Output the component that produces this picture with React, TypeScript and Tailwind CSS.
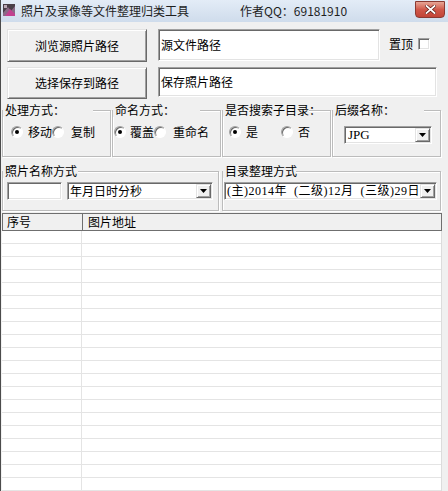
import React from "react";

const sunken =
  "border border-t-[#a0a0a0] border-l-[#a0a0a0] border-b-white border-r-white shadow-[inset_1px_1px_0_#696969,inset_-1px_-1px_0_#e3e3e3] bg-white";

function AppIcon() {
  return (
    <svg width="12" height="12" viewBox="0 0 12 12" className="ml-[2px] mt-[4px] shrink-0">
      <rect x="0" y="0" width="12" height="12" fill="#4a3f48" />
      <path d="M0 9 L5 3 L8 7 L12 2 L12 12 L0 12 Z" fill="#8a6a86" />
      <path d="M2 12 L7 5 L12 10 L12 12 Z" fill="#c2418f" />
      <rect x="1" y="1" width="3" height="3" fill="#b9a8b5" />
    </svg>
  );
}

function CloseButton() {
  return (
    <div className="ml-auto mr-[3px] mt-[1px] flex h-[17px] w-[30px] items-center justify-center rounded-b-[4px] border border-[#8b3a32] bg-linear-to-b from-[#e6a596] via-[#d0584a] to-[#c24538]">
      <svg width="11" height="9" viewBox="0 0 11 9">
        <path d="M1.5 1 L9.5 8 M9.5 1 L1.5 8" stroke="#5a1a14" strokeWidth="3.2" strokeLinecap="square" />
        <path d="M1.5 1 L9.5 8 M9.5 1 L1.5 8" stroke="#ffffff" strokeWidth="1.8" strokeLinecap="square" />
      </svg>
    </div>
  );
}

function Button3D({ label, className }: { label: string; className: string }) {
  return (
    <button
      className={`flex shrink-0 items-center justify-center border border-t-[#e3e3e3] border-l-[#e3e3e3] border-b-[#696969] border-r-[#696969] bg-[#f0f0f0] text-[12px] leading-none text-black shadow-[inset_1px_1px_0_#ffffff,inset_-1px_-1px_0_#a0a0a0] ${className}`}
    >
      {label}
    </button>
  );
}

function DropButton() {
  return (
    <span className="mr-[1px] flex h-[14px] w-[15px] shrink-0 items-center justify-center border border-t-[#e3e3e3] border-l-[#e3e3e3] border-b-[#696969] border-r-[#696969] bg-[#f0f0f0] shadow-[inset_1px_1px_0_#ffffff,inset_-1px_-1px_0_#a0a0a0]">
      <svg width="7" height="4" viewBox="0 0 7 4">
        <path d="M0 0 L7 0 L3.5 4 Z" fill="#000" />
      </svg>
    </span>
  );
}

function Combo({ text, className, textClass }: { text: string; className: string; textClass: string }) {
  return (
    <div className={`flex shrink-0 items-center ${sunken} ${className}`}>
      <span className={`min-w-0 flex-1 whitespace-nowrap pl-[2px] text-[12px] leading-[16px] ${textClass}`}>
        {text}
      </span>
      <DropButton />
    </div>
  );
}

function Radio({ checked }: { checked?: boolean }) {
  return (
    <span className="flex h-[12px] w-[12px] shrink-0 items-center justify-center rounded-full border border-t-[#a0a0a0] border-l-[#a0a0a0] border-b-white border-r-white bg-white shadow-[inset_1px_1px_0_#696969]">
      {checked && <span className="h-[4px] w-[4px] rounded-full bg-black" />}
    </span>
  );
}

function Group({
  legend,
  legendClass,
  className,
  children,
}: {
  legend: string;
  legendClass: string;
  className: string;
  children: React.ReactNode;
}) {
  return (
    <fieldset
      className={`shrink-0 border border-[#bcbcbc] shadow-[inset_1px_1px_0_#ffffff,1px_1px_0_#ffffff] ${className}`}
    >
      <legend className={`bg-[#f0f0f0] pl-[2px] text-[12px] leading-[14px] whitespace-nowrap ${legendClass}`}>
        {legend}
      </legend>
      {children}
    </fieldset>
  );
}

export default function App() {
  const rows = Array.from({ length: 20 });

  return (
    <div className="flex h-[491px] w-[448px] flex-col overflow-hidden border-l border-[#4b4b4b] bg-[#f0f0f0] font-[Noto_Sans_CJK_SC,sans-serif] text-black">
      {/* title bar */}
      <div className="flex h-[22px] shrink-0 items-start bg-linear-to-b from-[#e3ecf7] to-[#cfdcec]">
        <AppIcon />
        <span className="ml-[6px] mt-[3px] w-[219px] shrink-0 text-[12px] leading-[16px] text-[#1e1e1e]">
          照片及录像等文件整理归类工具
        </span>
        <span className="mt-[3px] text-[12px] leading-[16px] text-[#1e1e1e]">作者QQ：69181910</span>
        <CloseButton />
      </div>

      {/* source path */}
      <div className="mt-[7px] flex shrink-0 items-start">
        <Button3D label="浏览源照片路径" className="ml-[6px] h-[33px] w-[140px]" />
        <div className={`ml-[11px] flex h-[32px] w-[222px] shrink-0 items-center pl-[2px] text-[12px] ${sunken}`}>
          源文件路径
        </div>
        <div className="ml-[9px] mt-[9px] flex h-[12px] items-center">
          <span className="text-[12px] leading-none">置顶</span>
          <span className={`ml-[5px] h-[12px] w-[12px] ${sunken}`} />
        </div>
      </div>

      {/* save path */}
      <div className="mt-[5px] flex shrink-0 items-start">
        <Button3D label="选择保存到路径" className="ml-[6px] h-[32px] w-[140px]" />
        <div className={`ml-[11px] flex h-[30px] w-[279px] shrink-0 items-center pl-[2px] text-[12px] ${sunken}`}>
          保存照片路径
        </div>
      </div>

      {/* option groups */}
      <div className="mt-[4px] flex shrink-0 items-start">
        <Group legend="处理方式：" legendClass="w-[90px]" className="ml-[1px] h-[54px] w-[109px]">
          <div className="mt-[4px] flex h-[22px] items-center text-[12px] leading-none">
            <span className="ml-[8px]"><Radio checked /></span>
            <span className="ml-[5px]">移动</span>
            <Radio />
            <span className="ml-[7px]">复制</span>
          </div>
        </Group>
        <Group legend="命名方式：" legendClass="w-[87px]" className="ml-[1px] h-[54px] w-[109px]">
          <div className="mt-[4px] flex h-[22px] items-center text-[12px] leading-none">
            <span className="ml-[1px]"><Radio checked /></span>
            <span className="ml-[4px]">覆盖</span>
            <Radio />
            <span className="ml-[7px]">重命名</span>
          </div>
        </Group>
        <Group legend="是否搜索子目录：" legendClass="w-[86px]" className="ml-[1px] h-[54px] w-[109px]">
          <div className="mt-[4px] flex h-[22px] items-center text-[12px] leading-none">
            <span className="ml-[6px]"><Radio checked /></span>
            <span className="ml-[5px]">是</span>
            <span className="ml-[23px]"><Radio /></span>
            <span className="ml-[5px]">否</span>
          </div>
        </Group>
        <Group legend="后缀名称：" legendClass="w-[91px]" className="ml-[1px] h-[54px] w-[109px]">
          <Combo
            text="JPG"
            className="ml-[11px] mt-[9px] h-[18px] w-[88px]"
            textClass="font-[Liberation_Serif,serif] pl-[3px] text-[13px]"
          />
        </Group>
      </div>

      {/* naming groups */}
      <div className="mt-[7px] flex shrink-0 items-start">
        <Group legend="照片名称方式" legendClass="w-[75px]" className="ml-[1px] h-[47px] w-[217px]">
          <div className="mt-[4px] flex items-center">
            <div className={`ml-[4px] h-[18px] w-[55px] shrink-0 ${sunken}`} />
            <Combo text="年月日时分秒" className="ml-[5px] h-[18px] w-[146px]" textClass="pl-[2px]" />
          </div>
        </Group>
        <Group legend="目录整理方式" legendClass="w-[73px]" className="ml-[3px] h-[47px] w-[219px]">
          <div className="mt-[4px] flex items-center">
            <Combo
              text={"(主)2014年\u00a0\u00a0(二级)12月\u00a0\u00a0(三级)29日"}
              className="ml-[1px] h-[18px] w-[213px]"
              textClass="font-[Liberation_Serif,Noto_Sans_CJK_SC,serif] pl-[2px] tracking-[0.5px]"
            />
          </div>
        </Group>
      </div>

      {/* list */}
      <div className="ml-[1px] mt-[2px] flex w-[440px] flex-1 flex-col overflow-hidden">
        <div className="flex h-[18px] shrink-0 items-center border border-[#6f6f6f] bg-[#f0f0f0] text-[12px] leading-none">
          <div className="flex h-full w-[80px] items-center border-r border-[#6f6f6f] pl-[4px]">序号</div>
          <div className="pl-[5px]">图片地址</div>
        </div>
        <div className="flex-1 border-r border-[#dcdcdc] bg-white">
          {rows.map((_, i) => (
            <div key={i} className="flex h-[13px] border-b border-[#e4e4e4]">
              <div className="w-[80px] border-r border-[#e4e4e4]" />
              <div className="flex-1" />
            </div>
          ))}
        </div>
      </div>
    </div>
  );
}
